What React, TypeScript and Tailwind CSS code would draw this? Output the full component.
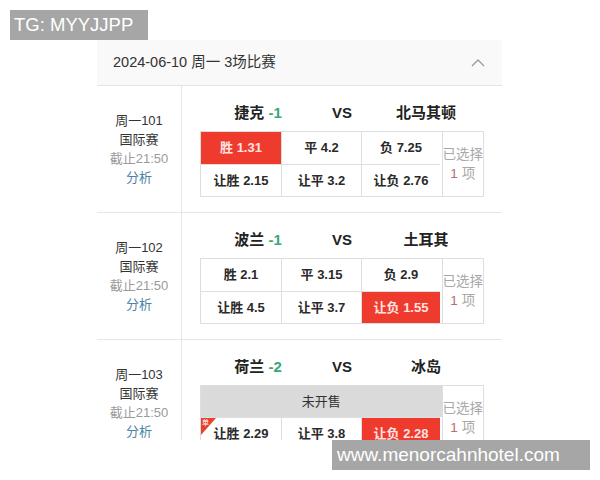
import React from "react";

const FONT = { fontFamily: '"Liberation Sans", "Noto Sans CJK SC", sans-serif' };

type Cell = { label: string; sel?: boolean; tag?: boolean };
type Match = {
  code: string;
  home: string;
  hcp: string;
  away: string;
  row1: Cell[] | null;
  row2: Cell[];
};

const matches: Match[] = [
  {
    code: "周一101",
    home: "捷克",
    hcp: "-1",
    away: "北马其顿",
    row1: [{ label: "胜 1.31", sel: true }, { label: "平 4.2" }, { label: "负 7.25" }],
    row2: [{ label: "让胜 2.15" }, { label: "让平 3.2" }, { label: "让负 2.76" }],
  },
  {
    code: "周一102",
    home: "波兰",
    hcp: "-1",
    away: "土耳其",
    row1: [{ label: "胜 2.1" }, { label: "平 3.15" }, { label: "负 2.9" }],
    row2: [{ label: "让胜 4.5" }, { label: "让平 3.7" }, { label: "让负 1.55", sel: true }],
  },
  {
    code: "周一103",
    home: "荷兰",
    hcp: "-2",
    away: "冰岛",
    row1: null,
    row2: [{ label: "让胜 2.29", tag: true }, { label: "让平 3.8" }, { label: "让负 2.28", sel: true }],
  },
];

function OddCell({ c, top, col }: { c: Cell; top: boolean; col: number }) {
  return (
    <div
      className={
        "relative flex items-center justify-center h-[32px] text-[13px] font-bold border-[#dedede] " +
        (col > 0 ? "border-l " : "") +
        (top ? "" : "border-t ") +
        (c.sel ? "bg-[#ef3b2e] text-[#ffe3e0]" : "bg-white text-[#2a2a2a]")
      }
    >
      {c.tag && (
        <div className="absolute left-0 top-0 w-[15px] h-[17px] bg-[#e8412f] [clip-path:polygon(0_0,100%_0,0_100%)]">
          <span className="absolute left-[1px] top-[0px] text-[7px] leading-[9px] text-white font-normal">单</span>
        </div>
      )}
      {c.label}
    </div>
  );
}

function MatchRow({ m }: { m: Match }) {
  return (
    <div className="flex h-[127px] border-b border-[#e6e6e6]">
      <div className="w-[85px] border-r border-[#e6e6e6] flex flex-col items-center justify-center text-[13px] leading-[19px]">
        <div className="text-[#333]">{m.code}</div>
        <div className="text-[#333]">国际赛</div>
        <div className="text-[#9a9a9a]">截止21:50</div>
        <div className="text-[#4b84a6]">分析</div>
      </div>
      <div className="flex-1 pl-[18px]">
        <div className="w-[284px]">
          <div className="h-[45px] pt-[18px] flex justify-center text-[15px] leading-[18px] font-bold text-[#222]">
            <div className="w-[84px] text-center">
              {m.home} <span className="text-[#3aa776] font-bold">{m.hcp}</span>
            </div>
            <div className="w-[84px] text-center">VS</div>
            <div className="w-[84px] text-center">{m.away}</div>
          </div>
          <div className="flex border border-[#dedede]">
            <div className="w-[241px] flex flex-col">
              {m.row1 ? (
                <div className="grid grid-cols-[80px_80px_79px]">
                  {m.row1.map((c, i) => (
                    <OddCell key={i} c={c} top col={i} />
                  ))}
                </div>
              ) : (
                <div className="h-[31px] bg-[#dadada] flex items-center justify-center text-[13px] text-[#333]">
                  未开售
                </div>
              )}
              <div className="grid grid-cols-[80px_80px_79px]">
                {m.row2.map((c, i) => (
                  <OddCell key={i} c={c} top={false} col={i} />
                ))}
              </div>
            </div>
            <div className="flex-1 border-l border-[#dedede] flex flex-col items-center justify-center text-[13.5px] leading-[19px] text-[#a8a8a8] whitespace-nowrap">
              <div>已选择</div>
              <div>
                <span className="text-[#b5706e]">1</span> 项
              </div>
            </div>
          </div>
        </div>
      </div>
    </div>
  );
}

export default function App() {
  return (
    <div className="relative w-[600px] h-[480px] bg-white overflow-hidden" style={FONT}>
      <div className="pt-[40px] pl-[97px]">
        <div className="w-[405px] h-[400px] overflow-hidden bg-white">
          <div className="h-[46px] bg-[#f9f9f9] border-b border-[#e4e4e4] flex items-center justify-between pl-[16px] pr-[17px]">
            <span className="text-[14.5px] text-[#333]">2024-06-10 周一 3场比赛</span>
            <svg width="14" height="9" viewBox="0 0 14 9" fill="none">
              <path d="M1 8 L7 2 L13 8" stroke="#9a9a9a" strokeWidth="1.3" />
            </svg>
          </div>
          {matches.map((m, i) => (
            <MatchRow key={i} m={m} />
          ))}
        </div>
      </div>

      <div className="absolute left-[10px] top-[10px] w-[138px] h-[30px] bg-[#a6a6a6] text-white text-[18.5px] leading-[30px] pl-[4px] whitespace-nowrap overflow-hidden">
        TG: MYYJJPP
      </div>
      <div className="absolute left-[332px] top-[440px] w-[258px] h-[30px] bg-[#a6a6a6] text-white text-[19px] leading-[30px] pl-[5px] whitespace-nowrap overflow-hidden">
        www.menorcahnhotel.com
      </div>
    </div>
  );
}
